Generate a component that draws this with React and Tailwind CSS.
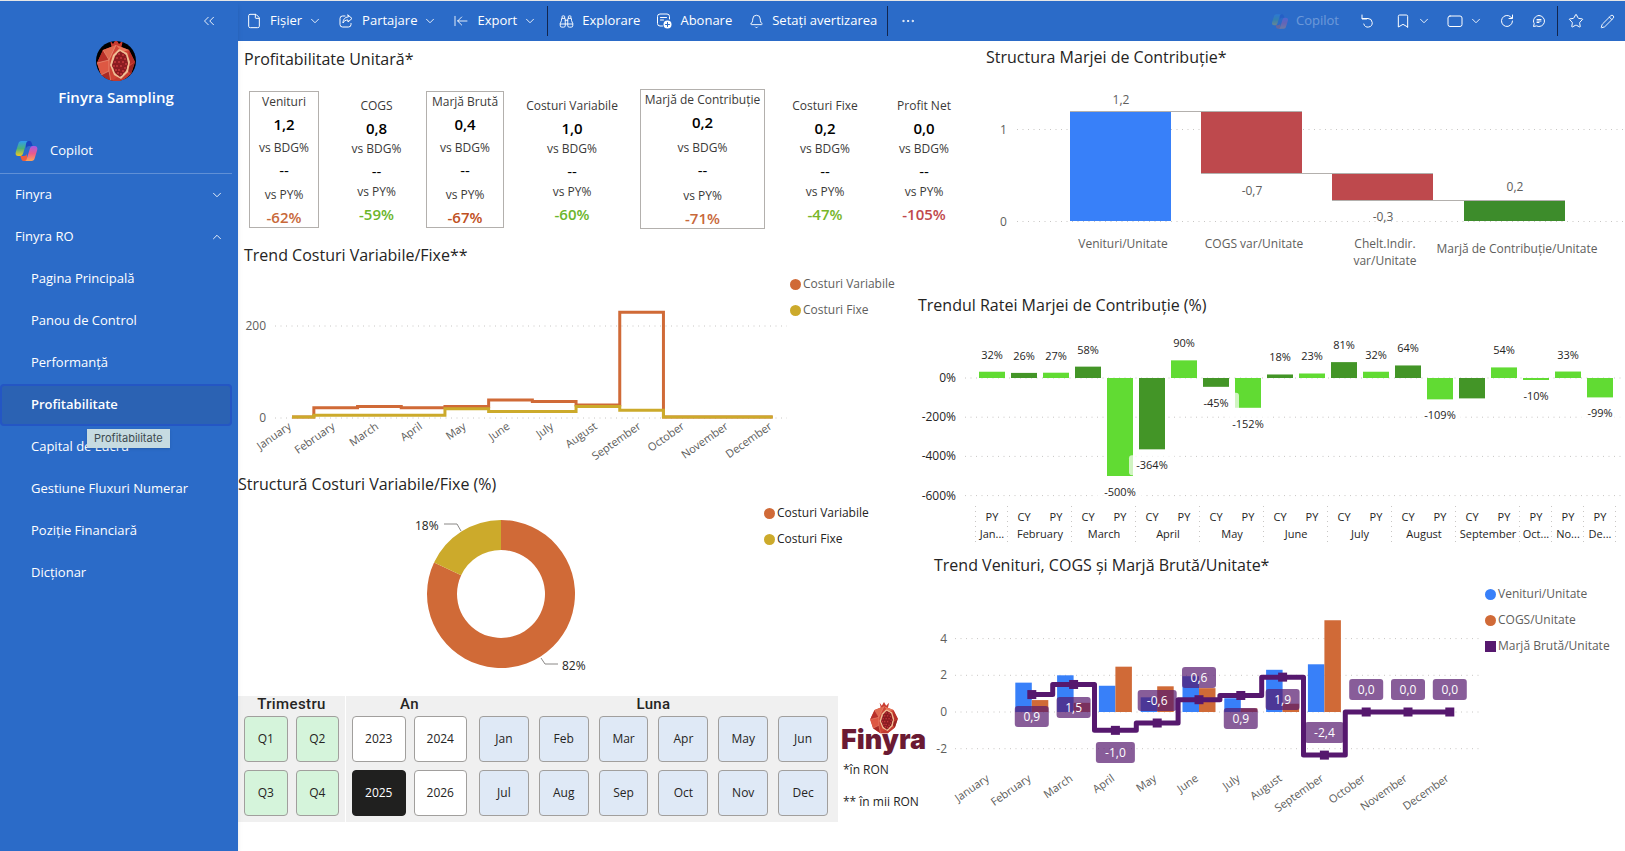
import React, { useState } from 'react'
import {
  ArrowLeftToLine,
  Bell,
  Binoculars,
  Bookmark,
  ChevronDown,
  ChevronUp,
  ChevronsLeft,
  Ellipsis,
  File,
  Pencil,
  Star,
} from 'lucide-react'

const MONTHS = [
  'January', 'February', 'March', 'April', 'May', 'June',
  'July', 'August', 'September', 'October', 'November', 'December',
]

const PAGES = [
  'Pagina Principală',
  'Panou de Control',
  'Performanță',
  'Profitabilitate',
  'Capital de Lucru',
  'Gestiune Fluxuri Numerar',
  'Poziție Financiară',
  'Dicționar',
]

const KPIS = [
  { label: 'Venituri', value: '1,2', py: '-62%', box: 'h-[137px] border', color: 'text-[#c8683a]' },
  { label: 'COGS', value: '0,8', py: '-59%', box: 'mt-0.5 h-32 pl-2', color: 'text-[#6bb52c]' },
  { label: 'Marjă Brută', value: '0,4', py: '-67%', box: 'h-[137px] border', color: 'text-[#bf4f22]' },
  { label: 'Costuri Variabile', value: '1,0', py: '-60%', box: 'mt-0.5 h-32', color: 'text-[#6bb52c]' },
  { label: 'Marjă de Contribuție', value: '0,2', py: '-71%', box: 'h-[140px] border', color: 'text-[#c8683a]' },
  { label: 'Costuri Fixe', value: '0,2', py: '-47%', box: 'mt-0.5 h-32', color: 'text-[#78b62a]' },
  { label: 'Profit Net', value: '0,0', py: '-105%', box: 'mt-0.5 h-32', color: 'text-[#c0484b]' },
]

const COSTS = {
  variable: [0, 20, 23, 20, 23, 37, 34, 26, 229, 0, 0, 0],
  fixed: [0, 4, 4, 4, 18, 12, 12, 23, 15, 0, 0, 0],
}

const MARGIN_RATE = [
  { month: 'Jan...', bars: [['PY', 32]] },
  { month: 'February', bars: [['CY', 26], ['PY', 27]] },
  { month: 'March', bars: [['CY', 58], ['PY', -500]] },
  { month: 'April', bars: [['CY', -364], ['PY', 90]] },
  { month: 'May', bars: [['CY', -45], ['PY', -152]] },
  { month: 'June', bars: [['CY', 18], ['PY', 23]] },
  { month: 'July', bars: [['CY', 81], ['PY', 32]] },
  { month: 'August', bars: [['CY', 64], ['PY', -109]] },
  { month: 'September', bars: [['CY', -104, true], ['PY', 54]] },
  { month: 'Oct...', bars: [['PY', -10]] },
  { month: 'No...', bars: [['PY', 33]] },
  { month: 'De...', bars: [['PY', -99]] },
]

// labelY is the centre of the value badge
const UNIT_TREND = [
  { revenue: 0, cogs: 0 },
  { revenue: 1.6, cogs: 0.65, margin: 0.95, label: '0,9', labelY: 133 },
  { revenue: 2, cogs: 0.5, margin: 1.5, label: '1,5', labelY: 124 },
  { revenue: 1.43, cogs: 2.47, margin: -1, label: '-1,0', labelY: 169 },
  { revenue: 0.8, cogs: 1.4, margin: -0.6, label: '-0,6', labelY: 117 },
  { revenue: 1.95, cogs: 1.3, margin: 0.67, label: '0,6', labelY: 94 },
  { revenue: 0.75, cogs: 0.2, margin: 0.9, label: '0,9', labelY: 135 },
  { revenue: 2.3, cogs: 0.45, margin: 1.9, label: '1,9', labelY: 116 },
  { revenue: 2.6, cogs: 5, margin: -2.35, label: '-2,4', labelY: 149 },
  { revenue: 0, cogs: 0, margin: 0, label: '0,0', labelY: 106 },
  { revenue: 0, cogs: 0, margin: 0, label: '0,0', labelY: 106 },
  { revenue: 0, cogs: 0, margin: 0, label: '0,0', labelY: 106 },
]

const stepPath = (points) =>
  points
    .map(([x, y], i) => {
      if (i === 0) return `M${x} ${y}`
      const [px] = points[i - 1]
      const mid = (px + x) / 2
      return `H${mid} V${y} H${x}`
    })
    .join(' ')

const Pomegranate = ({ className }) => (
  <svg viewBox="0 0 40 44" className={className} aria-hidden="true">
    <path d="M14 1l3 4 3-5 3 5 4-4-2 9H16z" fill="#c93b30" />
    <path d="M20 6 33 11 39 23 35 35 25 43H15L5 36 1 24 7 11z" fill="#cf4435" />
    <path d="M20 6 7 11 13 21z" fill="#e06a50" />
    <path d="M7 11 1 24l12-3z" fill="#b93129" />
    <path d="M1 24l4 12 8-4V21z" fill="#dd5843" />
    <path d="M5 36l10 7-2-11z" fill="#a92a25" />
    <path d="M20 6l13 5-7 2z" fill="#e8785b" />
    <path d="M33 11l6 12-7 3z" fill="#b52f29" />
    <path d="M39 23l-4 12-5-5z" fill="#9b2522" />
    <path d="M15 43h10l10-8-8-1z" fill="#c23a30" />
    <path d="M7 11l6 10 7-15M1 24l12-3v11l-8 4M13 32l2 11" stroke="#f0a184" strokeWidth=".6" fill="none" />
    <path d="M23 10l8 4 3 9-2 10-7 7-7-4-4-10 3-10z" fill="#f0bd93" />
    <path d="M24 12l6 4 2 8-2 8-6 6-5-4-3-8 3-9z" fill="#8e1d22" />
    {[
      [23, 15], [27, 16], [21, 19], [25, 19], [29, 20], [19, 23], [23, 23], [27, 23], [30, 25],
      [18, 27], [21, 27], [25, 27], [29, 29], [20, 31], [23, 31], [27, 32], [22, 34], [25, 35],
    ].map(([cx, cy]) => (
      <circle key={`${cx}-${cy}`} cx={cx} cy={cy} r="1.5" fill="#c5383a" stroke="#6d1219" strokeWidth=".5" />
    ))}
  </svg>
)

const CopilotIcon = ({ id, className }) => (
  <svg viewBox="0 0 24 22" className={className} aria-hidden="true">
    <defs>
      <linearGradient id={`${id}-a`} x1="0" y1="0" x2="0" y2="1">
        <stop offset="0" stopColor="#2f9bf0" />
        <stop offset=".5" stopColor="#4bb27a" />
        <stop offset="1" stopColor="#f2c81f" />
      </linearGradient>
      <linearGradient id={`${id}-b`} x1="0" y1="0" x2="0" y2="1">
        <stop offset="0" stopColor="#a25be8" />
        <stop offset=".5" stopColor="#ea5a8c" />
        <stop offset="1" stopColor="#fba457" />
      </linearGradient>
    </defs>
    <path d="M11 0h4c2 0 2.500 1.500 3 3l.8 2.500h-4c-1.500 0-2.500 1-3 2.500z" fill="#1a44c2" />
    <path d="M13 22H9c-2 0-2.500-1.500-3-3l-.8-2.500h4c1.500 0 2.500-1 3-2.500z" fill="#ee5b3c" />
    <path d="M6.500 0H14c-1.500 0-2 1.500-2.500 3L8.500 13c-.5 2-1.500 3.500-3.500 3.500H3c-2.500 0-3.500-2-2.800-4.500L3 3c.5-2 1.500-3 3.500-3z" fill={`url(#${id}-a)`} />
    <path d="M17.500 22H10c1.500 0 2-1.500 2.500-3l3-10c.5-2 1.500-3.500 3.500-3.500h2c2.500 0 3.500 2 2.800 4.500L21 19c-.5 2-1.500 3-3.500 3z" fill={`url(#${id}-b)`} />
  </svg>
)

const LineIcon = ({ size = 16, children }) => (
  <svg
    width={size}
    height={size}
    viewBox="0 0 16 16"
    fill="none"
    stroke="currentColor"
    strokeWidth="1"
    strokeLinecap="round"
    strokeLinejoin="round"
    aria-hidden="true"
  >
    {children}
  </svg>
)

const ShareIcon = () => (
  <LineIcon>
    <path d="M7 3H4.500A2.500 2.500 0 0 0 2 5.500v6A2.500 2.500 0 0 0 4.500 14h6a2.500 2.500 0 0 0 2.500-2.500V10.500" />
    <path d="M10 2l4 3.500L10 9V7c-2.500 0-4 .8-5 3 0-3.500 2-6 5-6z" />
  </LineIcon>
)

const SubscribeIcon = () => (
  <LineIcon size={18}>
    <path d="M6.500 13H4a2.500 2.500 0 0 1-2.500-2.500v-7A2.500 2.500 0 0 1 4 1h7a2.500 2.500 0 0 1 2.500 2.500V6M4.500 4.500h6M4.500 7h3" />
    <circle cx="11.500" cy="11.500" r="4" fill="currentColor" stroke="none" />
    <path d="M11.500 9.500v4M9.500 11.500h4" stroke="#2b6bc8" />
  </LineIcon>
)

const ResetIcon = () => (
  <LineIcon>
    <path d="M3 2v4h4.500M3.500 5.500H9A4.300 4.300 0 1 1 4.800 11" />
  </LineIcon>
)

const RefreshIcon = () => (
  <LineIcon>
    <path d="M13.500 8A5.500 5.500 0 1 1 11.800 4L13 5.200M13.500 2v3.500H10" />
  </LineIcon>
)

const CommentIcon = () => (
  <LineIcon>
    <path d="M8 2.500a5.500 5.500 0 1 1-2.500 10.400L2.500 13.500l.7-2.800A5.500 5.500 0 0 1 8 2.500zM6 6.500h4M6 8h4M6 9.500h2" />
  </LineIcon>
)

const ViewIcon = () => (
  <LineIcon>
    <rect x="1" y="3" width="14" height="10.500" rx="2" />
  </LineIcon>
)

const ToolbarDivider = () => <span className="h-[30px] w-px bg-[#12264f]" />

const ToolbarButton = ({ icon, label, menu, className = '' }) => (
  <button type="button" className={`flex items-center ${className}`}>
    <span className="mr-2 flex w-4 justify-center">{icon}</span>
    {label}
    {menu && <ChevronDown size={14} strokeWidth={1.5} className="ml-1.5" />}
  </button>
)

const IconButton = ({ label, children, className = '' }) => (
  <button type="button" aria-label={label} className={`flex items-center ${className}`}>
    {children}
  </button>
)

const Toolbar = () => (
  <header className="flex h-10 items-center justify-between bg-[#2b6bc8] text-[13px] text-white">
    <div className="flex items-center">
      <ToolbarButton icon={<File size={16} strokeWidth={1.5} />} label="Fișier" menu className="ml-2" />
      <ToolbarButton icon={<ShareIcon />} label="Partajare" menu className="ml-4" />
      <ToolbarButton icon={<ArrowLeftToLine size={16} strokeWidth={1.3} />} label="Export" menu className="mr-2.5 ml-4" />
      <ToolbarDivider />
      <ToolbarButton icon={<Binoculars size={15} strokeWidth={1.5} />} label="Explorare" className="ml-2.5" />
      <ToolbarButton icon={<SubscribeIcon />} label="Abonare" className="ml-4" />
      <ToolbarButton icon={<Bell size={15} strokeWidth={1.5} />} label="Setați avertizarea" className="mr-2.5 ml-4" />
      <ToolbarDivider />
      <IconButton label="Mai multe" className="ml-3">
        <Ellipsis size={16} strokeWidth={1.5} />
      </IconButton>
    </div>
    <div className="flex items-center">
      <button type="button" disabled className="mr-5 flex items-center gap-2 opacity-30">
        <CopilotIcon id="bar" className="h-[15px] w-4" />
        Copilot
      </button>
      <IconButton label="Resetare" className="mr-5"><ResetIcon /></IconButton>
      <IconButton label="Marcaje" className="mr-4 gap-1.5">
        <Bookmark size={16} strokeWidth={1.5} />
        <ChevronDown size={14} strokeWidth={1.5} />
      </IconButton>
      <IconButton label="Vizualizare" className="mr-4 gap-1.5">
        <ViewIcon />
        <ChevronDown size={14} strokeWidth={1.5} />
      </IconButton>
      <IconButton label="Reîmprospătare" className="mr-4"><RefreshIcon /></IconButton>
      <IconButton label="Comentarii" className="mr-2.5"><CommentIcon /></IconButton>
      <ToolbarDivider />
      <IconButton label="Favorite" className="ml-2.5"><Star size={16} strokeWidth={1.5} /></IconButton>
      <IconButton label="Editare" className="mr-2.5 ml-4"><Pencil size={15} strokeWidth={1.5} /></IconButton>
    </div>
  </header>
)

const Sidebar = ({ page, onSelect }) => (
  <aside className="z-10 w-[238px] shrink-0 bg-[#2b6bc8] text-[13px] text-white shadow-md">
    <div className="flex h-10 items-center justify-end pr-5">
      <button type="button" aria-label="Restrânge navigarea">
        <ChevronsLeft size={18} strokeWidth={1.2} />
      </button>
    </div>
    <div className="flex w-[232px] flex-col items-center">
      <div className="flex size-10 items-center justify-center overflow-hidden rounded-full bg-black">
        <Pomegranate className="h-11 w-10" />
      </div>
      <h1 className="mt-1 text-[15px] leading-6 font-semibold">Finyra Sampling</h1>
    </div>
    <nav className="w-[232px]">
      <a href="#copilot" className="mt-5 flex h-[45px] items-center gap-3 border-b border-white/25 pl-[15px]">
        <CopilotIcon id="side" className="h-5 w-[23px]" />
        Copilot
      </a>
      <button type="button" className="flex h-[42px] w-full items-center justify-between pr-2 pl-[15px]">
        Finyra
        <ChevronDown size={14} strokeWidth={1.5} />
      </button>
      <button type="button" className="flex h-[42px] w-full items-center justify-between pr-2 pl-[15px]">
        Finyra RO
        <ChevronUp size={14} strokeWidth={1.5} />
      </button>
      <ul>
        {PAGES.map((name) => (
          <li key={name} className="relative">
            <a
              href="#page"
              onClick={() => onSelect(name)}
              className={`flex h-[42px] items-center border-2 pl-[29px] ${
                name === page
                  ? 'rounded border-[#2456c4] bg-[#2b62b3] font-semibold'
                  : 'border-transparent'
              }`}
            >
              {name}
            </a>
            {name === page && (
              <span
                role="tooltip"
                className="absolute top-[45px] left-[87px] z-10 bg-[#c6dbe1] px-[7px] font-[Inter] text-[11px] leading-[19px] text-[#3c4a4f] shadow"
              >
                {name}
              </span>
            )}
          </li>
        ))}
      </ul>
    </nav>
  </aside>
)

const SectionTitle = ({ children, className = '' }) => (
  <h2 className={`flex items-center text-base whitespace-nowrap text-[#252423] ${className}`}>{children}</h2>
)

const Legend = ({ items, className = '' }) => (
  <ul className={`space-y-[6px] pt-px text-[12px] leading-5 whitespace-nowrap ${className}`}>
    {items.map((item) => (
      <li key={item.label} className="flex items-center gap-0.5">
        <span className={`size-[11px] ${item.swatch}`} />
        {item.label}
      </li>
    ))}
  </ul>
)

const GridLine = ({ x1, x2, y }) => (
  <line x1={x1} x2={x2} y1={y} y2={y} stroke="#c8c6c4" strokeDasharray="1 4.500" />
)

const KpiPair = ({ label, value, className }) => (
  <div className="flex flex-col items-center gap-0.5">
    <span>{label}</span>
    <span className={`text-[15px] ${className}`}>{value}</span>
  </div>
)

const KpiRow = () => (
  <div className="mt-3 -mr-[45px] ml-[11px] grid grid-cols-[70fr_107fr_78fr_136fr_125fr_120fr_78fr] items-center">
    {KPIS.map((kpi) => (
      <div
        key={kpi.label}
        className={`flex flex-col justify-between border-[#b3b0ad] text-[12px] leading-5 whitespace-nowrap text-[#3b3a39] ${kpi.box}`}
      >
        <KpiPair label={kpi.label} value={kpi.value} className="font-semibold text-black" />
        <KpiPair label="vs BDG%" value="--" className="text-black" />
        <KpiPair label="vs PY%" value={kpi.py} className={`font-semibold ${kpi.color}`} />
      </div>
    ))}
  </div>
)

const CostTrendChart = () => {
  const x = (i) => 54 + i * 43.7
  const y = (v) => 144 - v * 0.4575
  const points = (values) => values.map((v, i) => [x(i), y(v)])

  return (
    <svg viewBox="0 0 552 193" className="min-w-0 flex-[552]" fill="#605e5c">
      <GridLine x1={37} x2={549} y={53} />
      <GridLine x1={37} x2={549} y={145} />
      <g fontSize="12" textAnchor="end">
        <text x="28" y="57">200</text>
        <text x="28" y="149">0</text>
      </g>
      <path d={stepPath(points(COSTS.variable))} fill="none" stroke="#d06a37" strokeWidth="3" />
      <path d={stepPath(points(COSTS.fixed))} fill="none" stroke="#ccaa2b" strokeWidth="3" />
      <g fontSize="11" textAnchor="end">
        {MONTHS.map((month, i) => (
          <text key={month} transform={`translate(${x(i)} 155) rotate(-35)`}>{month}</text>
        ))}
      </g>
    </svg>
  )
}

const CostShareChart = () => {
  const cx = 263
  const cy = 92
  const angle = 0.18 * 2 * Math.PI
  const at = (r) => `${cx - r * Math.sin(angle)} ${cy - r * Math.cos(angle)}`

  return (
    <svg viewBox="0 0 526 194" className="min-w-0 flex-[526]" fill="#252423" fontSize="12">
      <path d={`M${cx} ${cy - 74}A74 74 0 1 1 ${at(74)}L${at(44)}A44 44 0 1 0 ${cx} ${cy - 44}z`} fill="#d06a37" />
      <path d={`M${cx} ${cy - 74}A74 74 0 0 0 ${at(74)}L${at(44)}A44 44 0 0 1 ${cx} ${cy - 44}z`} fill="#ccaa2b" />
      <path d="M206 22h13l4 7M303 156l4 6h13" fill="none" stroke="#8a8886" />
      <text x="177" y="28">18%</text>
      <text x="324" y="168">82%</text>
    </svg>
  )
}

const WaterfallChart = () => {
  const bars = [
    { x: 152, y: 38, h: 110, color: '#3880f9', value: '1,2', vy: 31, name: ['Venituri/Unitate'], ny: 175 },
    { x: 283, y: 38, h: 62, color: '#be494d', value: '-0,7', vy: 122, name: ['COGS var/Unitate'], ny: 175 },
    { x: 414, y: 100, h: 27, color: '#be494d', value: '-0,3', vy: 148, name: ['Chelt.Indir.', 'var/Unitate'], ny: 175 },
    { x: 546, y: 127, h: 21, color: '#3d8c2b', value: '0,2', vy: 118, name: ['Marjă de Contribuție/Unitate'], ny: 180 },
  ]

  return (
    <svg viewBox="0 0 707 214" className="w-full" fill="#605e5c" fontSize="12">
      <GridLine x1={99} x2={707} y={56.5} />
      <GridLine x1={99} x2={707} y={148.5} />
      <text x="82" y="61">1</text>
      <text x="82" y="153">0</text>
      {bars.map((bar) => (
        <rect key={bar.x} x={bar.x} y={bar.y} width="101" height={bar.h} fill={bar.color} />
      ))}
      <path d="M152 38.500H384M283 100.500H515M414 127.500H647" stroke="#b3b0ad" />
      <g textAnchor="middle">
        {bars.map((bar) => (
          <g key={bar.x}>
            <text x={bar.x + 51} y={bar.vy}>{bar.value}</text>
            {bar.name.map((line, i) => (
              <text key={line} x={bar.x + 53} y={bar.ny + i * 17}>{line}</text>
            ))}
          </g>
        ))}
      </g>
    </svg>
  )
}

const MarginRateChart = () => {
  const zero = 55
  const unit = 0.196
  let slot = 0
  const groups = MARGIN_RATE.map((group) => {
    const start = slot
    slot += group.bars.length
    return { ...group, start }
  })
  const bars = groups.flatMap((group) =>
    group.bars.map(([period, value, hideLabel], i) => ({
      period,
      value,
      hideLabel,
      x: 61 + (group.start + i) * 32,
    }))
  )

  return (
    <svg viewBox="0 0 707 224" className="w-full" fill="#252423" fontSize="11">
      {[0, -200, -400, -600].map((tick) => (
        <g key={tick}>
          <GridLine x1={47} x2={707} y={zero - tick * unit} />
          <text x="38" y={zero - tick * unit + 4} fontSize="12" textAnchor="end">{tick}%</text>
        </g>
      ))}
      {bars.map((bar) => {
        const h = Math.max(Math.abs(bar.value) * unit, 2)
        return (
          <rect
            key={bar.x}
            x={bar.x}
            y={bar.value > 0 ? zero - h : zero}
            width="26"
            height={h}
            fill={bar.period === 'CY' ? '#439527' : '#61db33'}
          />
        )
      })}
      <g textAnchor="middle">
        {bars.filter((bar) => !bar.hideLabel).map((bar) => {
          const cy = zero - bar.value * unit + (bar.value > 0 ? -17 : 16)
          const w = bar.value < 0 ? 46 : 36
          return (
            <g key={bar.x}>
              <rect x={bar.x + 13 - w / 2} y={cy - 10} width={w} height="20" rx="3" fill="#fff" opacity=".7" />
              <text x={bar.x + 13} y={cy + 4}>{bar.value}%</text>
            </g>
          )
        })}
        {bars.map((bar) => (
          <text key={bar.x} x={bar.x + 13} y="198">{bar.period}</text>
        ))}
        {groups.map((group) => (
          <text key={group.month} x={58 + (group.start + group.bars.length / 2) * 32} y="215">{group.month}</text>
        ))}
      </g>
      {[...groups.map((group) => group.start), slot].map((s) => (
        <line key={s} x1={57.5 + s * 32} x2={57.5 + s * 32} y1="183" y2="223" stroke="#c8c6c4" strokeDasharray="1 4" />
      ))}
    </svg>
  )
}

const UnitTrendChart = () => {
  const x = (i) => 72 + i * 41.8
  const y = (v) => 129 - v * 18.35
  const line = UNIT_TREND.map((d, i) => [x(i), y(d.margin)]).slice(1)

  return (
    <svg viewBox="0 0 567 237" className="min-w-0 flex-[567]" fill="#605e5c">
      {[4, 2, 0, -2].map((tick) => (
        <g key={tick}>
          <GridLine x1={37} x2={561} y={y(tick)} />
          <text x="29" y={y(tick) + 4} fontSize="12" textAnchor="end">{tick}</text>
        </g>
      ))}
      {UNIT_TREND.map((d, i) => (
        <g key={MONTHS[i]}>
          <rect x={x(i) - 16.5} y={y(d.revenue)} width="16.500" height={d.revenue * 18.35} fill="#3880f9" />
          <rect x={x(i)} y={y(d.cogs)} width="16.500" height={d.cogs * 18.35} fill="#d06a37" />
        </g>
      ))}
      <path d={stepPath(line)} fill="none" stroke="#56186e" strokeWidth="5" strokeLinejoin="round" />
      {line.map(([px, py]) => (
        <rect key={px} x={px - 4.5} y={py - 4.5} width="9" height="9" fill="#56186e" />
      ))}
      <g fontSize="12" textAnchor="middle">
        {UNIT_TREND.map((d, i) => {
          if (!d.label) return null
          const w = d.label.length > 3 ? 39 : 34
          return (
            <g key={MONTHS[i]}>
              <rect x={x(i) - w / 2} y={d.labelY - 10} width={w} height="21" rx="3" fill="#56186e" opacity=".7" />
              <text x={x(i)} y={d.labelY + 5} fill="#fff">{d.label}</text>
            </g>
          )
        })}
      </g>
      <g fontSize="11" textAnchor="end">
        {MONTHS.map((month, i) => (
          <text key={month} transform={`translate(${x(i)} 197) rotate(-35)`}>{month}</text>
        ))}
      </g>
    </svg>
  )
}

const Slicer = ({ title, items, selected, onSelect, grid, button, className }) => (
  <div role="group" aria-label={title} className={`min-w-0 ${className}`}>
    <h3 className="h-5 text-center font-[Roboto] text-[15px] leading-4 font-medium tracking-wide text-[#252423]">
      {title}
    </h3>
    <div className={`grid gap-y-2 ${grid}`}>
      {items.map((item) => (
        <button
          key={item}
          type="button"
          onClick={() => onSelect && onSelect(item)}
          className={`h-[46px] rounded border text-[12px] ${
            item === selected ? 'border-[#20201f] bg-[#20201f] text-white' : `border-[#a19f9d] text-[#252423] ${button}`
          }`}
        >
          {item}
        </button>
      ))}
    </div>
  </div>
)

const Filters = () => {
  const [year, setYear] = useState('2025')

  return (
    <div className="-mr-2 grid grid-cols-[600fr_88fr]">
      <div className="grid h-[126px] min-w-0 grid-cols-[108fr_127fr_365fr] bg-[#f0f0f0]">
        <Slicer
          title="Trimestru"
          items={['Q1', 'Q2', 'Q3', 'Q4']}
          grid="grid-cols-2 gap-x-2"
          button="bg-[#d5f4db]"
          className="border-r border-white px-1.5"
        />
        <Slicer
          title="An"
          items={['2023', '2024', '2025', '2026']}
          selected={year}
          onSelect={setYear}
          grid="grid-cols-2 gap-x-2"
          button="bg-white"
          className="px-1.5"
        />
        <Slicer
          title="Luna"
          items={['Jan', 'Feb', 'Mar', 'Apr', 'May', 'Jun', 'Jul', 'Aug', 'Sep', 'Oct', 'Nov', 'Dec']}
          grid="grid-cols-6 gap-x-2.5"
          button="bg-[#dfe9f6]"
          className="pr-2.5 pl-1.5"
        />
      </div>
      <div className="min-w-0 pt-1.5 pl-[3px] whitespace-nowrap text-[#252423]">
        <Pomegranate className="mx-auto h-8 w-[30px]" />
        <div className="-mt-2 font-[Inter] text-[27px] leading-7 font-black text-[#6a1a33]">Finyra</div>
        <p className="pl-0.5 text-[12px] leading-8">*în RON</p>
        <p className="pl-0.5 text-[12px] leading-8">** în mii RON</p>
      </div>
    </div>
  )
}

const Report = () => (
  <div className="grid grid-cols-[680fr_707fr]">
    <div className="min-w-0">
      <section>
        <SectionTitle className="h-9 pl-1.5">Profitabilitate Unitară*</SectionTitle>
        <KpiRow />
      </section>
      <section>
        <SectionTitle className="mt-2 h-9 pl-1.5">Trend Costuri Variabile/Fixe**</SectionTitle>
        <div className="flex items-start">
          <CostTrendChart />
          <Legend
            className="min-w-0 flex-[128] text-[#605e5c]"
            items={[
              { label: 'Costuri Variabile', swatch: 'rounded-full bg-[#d06a37]' },
              { label: 'Costuri Fixe', swatch: 'rounded-full bg-[#ccaa2b]' },
            ]}
          />
        </div>
      </section>
      <section>
        <SectionTitle className="h-9">Structură Costuri Variabile/Fixe (%)</SectionTitle>
        <div className="flex items-start">
          <CostShareChart />
          <Legend
            className="min-w-0 flex-[154] text-[#252423]"
            items={[
              { label: 'Costuri Variabile', swatch: 'rounded-full bg-[#d06a37]' },
              { label: 'Costuri Fixe', swatch: 'rounded-full bg-[#ccaa2b]' },
            ]}
          />
        </div>
      </section>
      <Filters />
    </div>

    <div className="min-w-0">
      <section>
        <SectionTitle className="h-8 pl-[68px]">Structura Marjei de Contribuție*</SectionTitle>
        <WaterfallChart />
      </section>
      <section>
        <SectionTitle className="h-9">Trendul Ratei Marjei de Contribuție (%)</SectionTitle>
        <MarginRateChart />
      </section>
      <section>
        <SectionTitle className="h-9 pl-4">Trend Venituri, COGS și Marjă Brută/Unitate*</SectionTitle>
        <div className="flex items-start">
          <UnitTrendChart />
          <Legend
            className="min-w-0 flex-[140] text-[#605e5c]"
            items={[
              { label: 'Venituri/Unitate', swatch: 'rounded-full bg-[#3880f9]' },
              { label: 'COGS/Unitate', swatch: 'rounded-full bg-[#d06a37]' },
              { label: 'Marjă Brută/Unitate', swatch: 'bg-[#56186e]' },
            ]}
          />
        </div>
      </section>
    </div>
  </div>
)

const App = () => {
  const [page, setPage] = useState('Profitabilitate')

  return (
    <div className="flex min-h-screen overflow-hidden border-t border-[#e6e6e6] bg-white font-['Open_Sans',sans-serif]">
      <Sidebar page={page} onSelect={setPage} />
      <main className="min-w-0 flex-1">
        <Toolbar />
        <Report />
      </main>
    </div>
  )
}

export default App
